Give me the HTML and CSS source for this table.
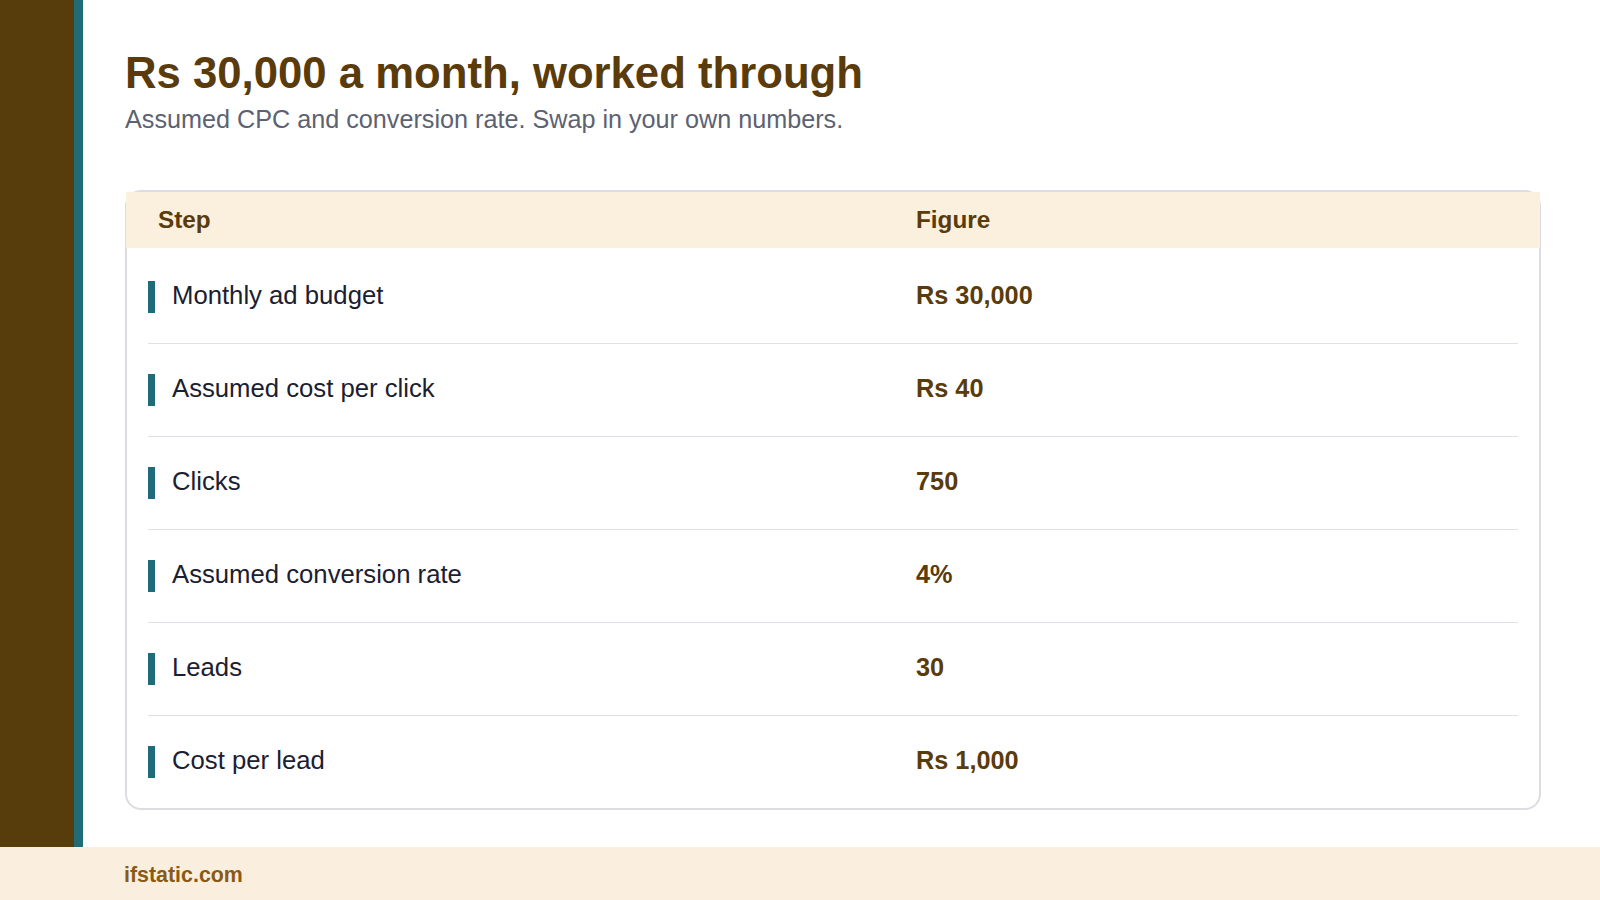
FILE: index.html
```html
<!DOCTYPE html>
<html lang="en">
<head>
<meta charset="utf-8">
<title>Rs 30,000 a month, worked through</title>
<link rel="stylesheet" href="styles.css">
</head>
<body>
<div class="page">
  <div class="top">
    <aside class="rail"></aside>
    <main class="main">
      <h1 class="title">Rs 30,000 a month, worked through</h1>
      <p class="subtitle">Assumed CPC and conversion rate. Swap in your own numbers.</p>
      <section class="card">
        <div class="head">
          <div class="head-cell">Step</div>
          <div class="head-cell">Figure</div>
        </div>
        <div class="rows">
          <div class="row">
            <div class="step"><span class="mark"></span>Monthly ad budget</div>
            <div class="fig">Rs 30,000</div>
          </div>
          <div class="row">
            <div class="step"><span class="mark"></span>Assumed cost per click</div>
            <div class="fig">Rs 40</div>
          </div>
          <div class="row">
            <div class="step"><span class="mark"></span>Clicks</div>
            <div class="fig">750</div>
          </div>
          <div class="row">
            <div class="step"><span class="mark"></span>Assumed conversion rate</div>
            <div class="fig">4%</div>
          </div>
          <div class="row">
            <div class="step"><span class="mark"></span>Leads</div>
            <div class="fig">30</div>
          </div>
          <div class="row">
            <div class="step"><span class="mark"></span>Cost per lead</div>
            <div class="fig">Rs 1,000</div>
          </div>
        </div>
      </section>
    </main>
  </div>
  <footer class="footer">ifstatic.com</footer>
</div>
</body>
</html>
```

FILE: styles.css
```css
* { box-sizing: border-box; }
html, body { margin: 0; padding: 0; background: #ffffff; }
body { font-family: "Liberation Sans", Arial, sans-serif; }

.page {
  width: 1600px;
  height: 900px;
  display: grid;
  grid-template-rows: 847px 53px;
  overflow: hidden;
}

.top {
  display: flex;
  min-height: 0;
}

.rail {
  width: 83px;
  flex: 0 0 83px;
  background: #573c0c;
  border-right: 9px solid #1f6b78;
}

.main {
  flex: 1;
  padding: 48px 59px 0 42px;
}

.title {
  margin: 0;
  font-size: 43.7px;
  line-height: 1.15;
  font-weight: 700;
  color: #5a3b0b;
}

.subtitle {
  margin: 5px 0 0;
  font-size: 25.2px;
  line-height: 1.3;
  color: #5c6271;
}

.card {
  margin-top: 54px;
  border: 2px solid #dcdde2;
  border-radius: 16px;
  background: #fff;
}

.head {
  display: grid;
  grid-template-columns: 758px 1fr;
  height: 56px;
  align-items: center;
  padding: 0 31px 0 32px;
  background: #fbefdd;
  margin: 0 -1px;
}

.head-cell {
  font-size: 24.3px;
  font-weight: 700;
  color: #5a3b0b;
}

.rows {
  padding: 3px 21px 0;
}

.row {
  display: grid;
  grid-template-columns: 768px 1fr;
  align-items: center;
  height: 93px;
  padding-bottom: 4px;
  border-bottom: 1px solid #dfe1e6;
}

.row:last-child {
  border-bottom: none;
  height: 92px;
}

.step {
  display: flex;
  align-items: center;
  font-size: 25.7px;
  color: #1b2030;
}

.mark {
  width: 7px;
  height: 32px;
  background: #1f6b78;
  margin-right: 17px;
  margin-top: 4px;
  flex: 0 0 auto;
}

.fig {
  font-size: 25.3px;
  font-weight: 700;
  color: #5a3b0b;
}

.footer {
  background: #faefdf;
  display: flex;
  align-items: center;
  padding-left: 124px;
  padding-top: 3px;
  font-size: 21.4px;
  font-weight: 700;
  color: #8a5a14;
}
```
